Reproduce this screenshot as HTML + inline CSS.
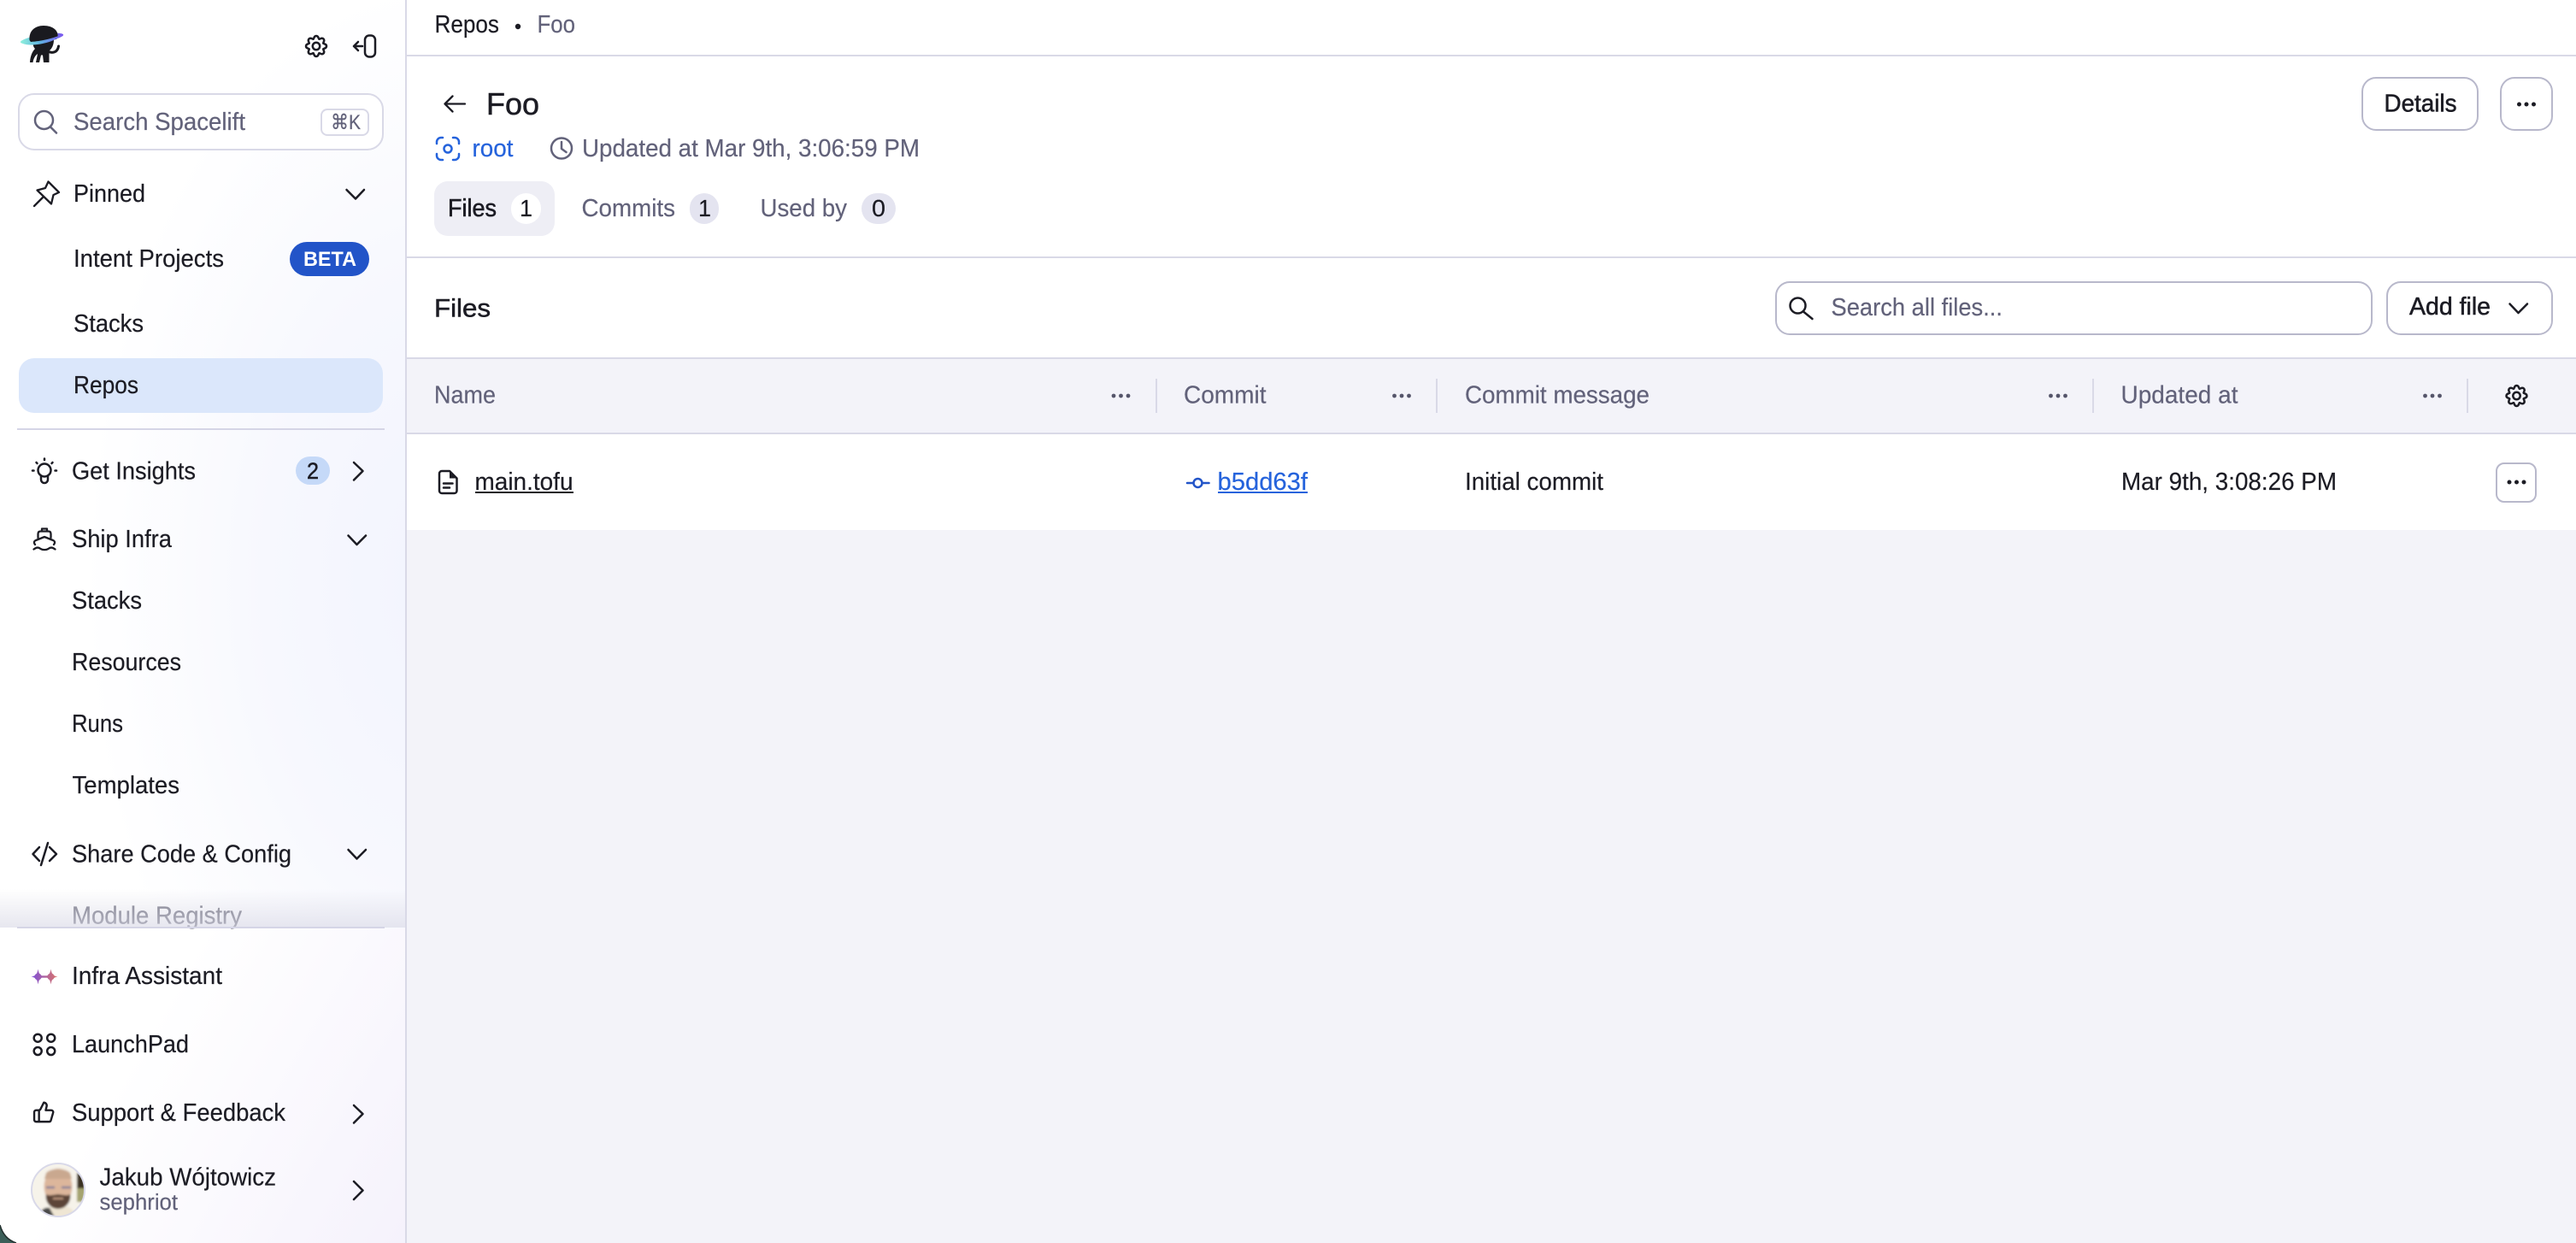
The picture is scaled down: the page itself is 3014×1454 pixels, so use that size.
<!DOCTYPE html>
<html lang="en">
<head>
<meta charset="utf-8">
<title>Foo - Repos</title>
<style>
html,body{margin:0;padding:0;width:3014px;height:1454px;overflow:hidden;background:#f3f3f9}
.a{position:absolute;box-sizing:border-box}
svg{position:absolute;left:0;top:0}
text{font-family:"Liberation Sans","DejaVu Sans",sans-serif;font-size:28.5px;fill:#1c1c24;stroke:#1c1c24;stroke-width:.2px}
text.g{fill:#62627a;stroke:#62627a}
text.b{fill:#2563dc;stroke:#2563dc}
text.m{stroke-width:.55px}
.i{fill:none;stroke:#1c1c24;stroke-width:2.5;stroke-linecap:round;stroke-linejoin:round}
.ig{stroke:#62627a}
.ib{stroke:#2563dc}
</style>
</head>
<body>
<div class="a" style="left:476px;top:0;width:2538px;height:620px;background:#fff"></div>
<div class="a" style="left:476px;top:420px;width:2538px;height:86px;background:#f3f3f9"></div>
<div class="a" style="left:476px;top:64px;width:2538px;height:2px;background:#d9d9e7"></div>
<div class="a" style="left:476px;top:300px;width:2538px;height:2px;background:#d9d9e7"></div>
<div class="a" style="left:476px;top:418px;width:2538px;height:2px;background:#d9d9e7"></div>
<div class="a" style="left:476px;top:506px;width:2538px;height:2px;background:#d9d9e7"></div>

<div class="a" style="left:0;top:0;width:476px;height:1086px;background:radial-gradient(420px 700px at 520px 680px,#f2f4fe 0%,#f7f8fe 50%,#ffffff 100%);border-right:2px solid #d9d9e7"></div>
<div class="a" style="left:0;top:1086px;width:476px;height:368px;background:linear-gradient(120deg,#ffffff 35%,#f5f2fc 100%);border-right:2px solid #d9d9e7"></div>

<div class="a" style="left:21px;top:109px;width:428px;height:67px;background:#fff;border:2px solid #d9d9e7;border-radius:19px"></div>
<div class="a" style="left:375px;top:127px;width:57px;height:32px;border:2px solid #d9d9e7;border-radius:8px"></div>
<div class="a" style="left:22px;top:419px;width:426px;height:64px;background:#dbe7fb;border-radius:18px"></div>
<div class="a" style="left:339px;top:283px;width:93px;height:40px;background:#2254c8;border-radius:20px"></div>
<div class="a" style="left:20px;top:501px;width:430px;height:2px;background:#d5d5e6"></div>
<div class="a" style="left:346px;top:534px;width:40px;height:33px;background:#c5d9f8;border-radius:17px"></div>

<div class="a" style="left:508px;top:212px;width:141px;height:64px;background:#eeeef5;border-radius:16px"></div>
<div class="a" style="left:598px;top:226px;width:35px;height:36px;background:#fff;border-radius:18px"></div>
<div class="a" style="left:807px;top:226px;width:34px;height:36px;background:#e4e4f0;border-radius:18px"></div>
<div class="a" style="left:1008px;top:226px;width:40px;height:36px;background:#e4e4f0;border-radius:18px"></div>

<div class="a" style="left:2763px;top:90px;width:137px;height:63px;background:#fff;border:2px solid #b8b8cb;border-radius:17px"></div>
<div class="a" style="left:2925px;top:90px;width:62px;height:63px;background:#fff;border:2px solid #b8b8cb;border-radius:17px"></div>
<div class="a" style="left:2077px;top:329px;width:699px;height:63px;background:#fff;border:2px solid #b8b8cb;border-radius:17px"></div>
<div class="a" style="left:2792px;top:329px;width:195px;height:63px;background:#fff;border:2px solid #b8b8cb;border-radius:17px"></div>
<div class="a" style="left:2920px;top:541px;width:48px;height:47px;background:#fff;border:2px solid #b8b8cb;border-radius:10px"></div>

<div class="a" style="left:1352px;top:443px;width:2px;height:40px;background:#d9d9e7"></div>
<div class="a" style="left:1680px;top:443px;width:2px;height:40px;background:#d9d9e7"></div>
<div class="a" style="left:2448px;top:443px;width:2px;height:40px;background:#d9d9e7"></div>
<div class="a" style="left:2886px;top:443px;width:2px;height:40px;background:#d9d9e7"></div>

<svg width="3014" height="1454" viewBox="0 0 3014 1454" xmlns="http://www.w3.org/2000/svg">
<defs>
<linearGradient id="ring" x1="24" y1="0" x2="74" y2="0" gradientUnits="userSpaceOnUse"><stop offset="0" stop-color="#8ff0dc"/><stop offset=".45" stop-color="#5fb4e0"/><stop offset="1" stop-color="#7a55f0"/></linearGradient>
<linearGradient id="spark" x1="36" y1="0" x2="68" y2="0" gradientUnits="userSpaceOnUse"><stop offset="0" stop-color="#7c50dc"/><stop offset="1" stop-color="#dc7468"/></linearGradient>
<linearGradient id="fade" x1="0" y1="0" x2="0" y2="1"><stop offset="0" stop-color="#d8d8e4" stop-opacity="0"/><stop offset="1" stop-color="#d8d8e6" stop-opacity=".62"/></linearGradient>
<clipPath id="av"><circle cx="68" cy="1392" r="31"/></clipPath>
<filter id="bl"><feGaussianBlur stdDeviation="1.2"/></filter>
<path id="tooth" d="M-3.44-8.31C-2.4-8.7-3-12 0-12S2.4-8.7 3.44-8.31"/>
<g id="gear"><use href="#tooth"/><use href="#tooth" transform="rotate(45)"/><use href="#tooth" transform="rotate(90)"/><use href="#tooth" transform="rotate(135)"/><use href="#tooth" transform="rotate(180)"/><use href="#tooth" transform="rotate(225)"/><use href="#tooth" transform="rotate(270)"/><use href="#tooth" transform="rotate(315)"/><circle r="4.2"/></g>
</defs>

<!-- logo -->
<ellipse cx="49" cy="45" rx="25.500" ry="4.500" transform="rotate(-10 49 45)" fill="url(#ring)"/>
<path d="M34.500 47C33.500 36 41 30 51 30C62 30 68.500 36 67.500 43L66 46 36 49Z" fill="#1a1a1f"/>
<path d="M38 49L63 46C63 53 60.500 57 57.500 59.500L57.500 73 51 73 50 64.500 48 64.500 46 73 42 73 44 63C41 65 39 69 38.500 73L35 73C35.500 65 38 60 41 57C39 55 38.500 52 38 49Z" fill="#1a1a1f"/>
<path d="M57 60.500C62 62.500 67.500 61 68.500 54" fill="none" stroke="#1a1a1f" stroke-width="3" stroke-linecap="round"/>
<path d="M24 49C36 50.500 55 47.500 74 40C66 47.500 50 52.500 36 52.500C30 52.500 25 51 24 49Z" fill="url(#ring)"/>

<g class="i" transform="translate(370 54)"><use href="#gear"/></g>
<path class="i" d="M424 54H414M419 49L414 54L419 59"/>
<rect class="i" x="427" y="41.500" width="12" height="25" rx="5"/>

<circle class="i ig" cx="51.500" cy="140.500" r="10.500"/><path class="i ig" d="M59 148.500L66 155.500"/>
<text x="86" y="152" class="g" textLength="201" lengthAdjust="spacingAndGlyphs">Search Spacelift</text>
<text x="387" y="151" class="g" style="font-size:24px" textLength="35" lengthAdjust="spacingAndGlyphs">⌘K</text>

<path class="i" d="M56.500 212.500L69 225L62.500 228L60 238.500L43.500 222.500L53 220ZM40 241L50 231" style="stroke-width:2.3"/>
<text x="86" y="236" textLength="84" lengthAdjust="spacingAndGlyphs">Pinned</text>
<path class="i" d="M405.500 222L416 232.500L426 222"/>
<text x="86" y="312" textLength="176" lengthAdjust="spacingAndGlyphs">Intent Projects</text>
<text x="355" y="311" style="font-size:24px;font-weight:bold;fill:#fff;stroke:none" textLength="62" lengthAdjust="spacingAndGlyphs">BETA</text>
<text x="86" y="388" textLength="82" lengthAdjust="spacingAndGlyphs">Stacks</text>
<text x="86" y="460" textLength="76" lengthAdjust="spacingAndGlyphs">Repos</text>

<!-- insights -->
<circle class="i" cx="52" cy="550" r="7.500"/>
<path class="i" d="M48 557V561A4 4 0 0 0 56 561V557M52 536.500V538M42.500 541L43.500 542M61.500 541L60.500 542M38 550.500H39.500M64.500 550.500H66"/>
<text x="84" y="560.500" textLength="145" lengthAdjust="spacingAndGlyphs">Get Insights</text>
<text x="359" y="560" style="font-size:27px;stroke-width:.5px" textLength="14" lengthAdjust="spacingAndGlyphs">2</text>
<path class="i" d="M414 541L424.500 551L414 561.500"/>

<!-- ship -->
<path class="i" d="M44.500 629V624.500Q44.500 621.500 47.500 621.500H56.500Q59.500 621.500 59.500 624.500V629M49 621V618.500H55V621M41 637Q38.500 633.500 42 632L52 628L62 632Q65.500 633.500 63 637M39.500 642.500C43 640 45 640 47.500 642C50 643.500 54 643.500 56.500 642C59 640 61 640 64.500 642.500" style="stroke-width:2.300"/>
<text x="84" y="640" textLength="117" lengthAdjust="spacingAndGlyphs">Ship Infra</text>
<path class="i" d="M407.500 626.500L417.500 637L428 626.500"/>
<text x="84" y="712" textLength="82" lengthAdjust="spacingAndGlyphs">Stacks</text>
<text x="84" y="784" textLength="128" lengthAdjust="spacingAndGlyphs">Resources</text>
<text x="84" y="856" textLength="60" lengthAdjust="spacingAndGlyphs">Runs</text>
<text x="84.500" y="928" textLength="125.500" lengthAdjust="spacingAndGlyphs">Templates</text>

<path class="i" d="M46 991L38.500 999L46 1007M56 986L48 1012M58 991L66 999L58 1007"/>
<text x="84" y="1008.500" textLength="257" lengthAdjust="spacingAndGlyphs">Share Code &amp; Config</text>
<path class="i" d="M407.500 994L417.500 1004.500L428 994"/>
<text x="84" y="1080.500" textLength="199" lengthAdjust="spacingAndGlyphs" style="fill:#7a7a88;stroke:#7a7a88">Module Registry</text>
<rect x="0" y="1040" width="474" height="45" fill="url(#fade)"/>
<rect x="20" y="1084" width="430" height="2" fill="#d5d5e6"/>

<!-- bottom -->
<g fill="url(#spark)">
<path d="M44.500 1133.500C45.500 1139.500 47 1141.500 52.500 1142.500C47 1143.500 45.500 1145.500 44.500 1151.500C43.500 1145.500 42 1143.500 36.500 1142.500C42 1141.500 43.500 1139.500 44.500 1133.500Z"/>
<path d="M59.500 1133.500C60.500 1139.500 62 1141.500 67.500 1142.500C62 1143.500 60.500 1145.500 59.500 1151.500C58.500 1145.500 57 1143.500 51.500 1142.500C57 1141.500 58.500 1139.500 59.500 1133.500Z"/>
<circle cx="44.500" cy="1142.500" r="4"/><circle cx="59.500" cy="1142.500" r="4"/>
<rect x="44" y="1141.300" width="16" height="2.400"/>
</g>
<text x="84" y="1151" textLength="176" lengthAdjust="spacingAndGlyphs">Infra Assistant</text>

<circle class="i" cx="44.200" cy="1214.200" r="4.500"/><circle class="i" cx="59.700" cy="1214.200" r="4.500"/><circle class="i" cx="44.200" cy="1229.500" r="4.500"/><circle class="i" cx="59.700" cy="1229.500" r="4.500"/>
<text x="84" y="1231" textLength="137" lengthAdjust="spacingAndGlyphs">LaunchPad</text>

<g transform="translate(37.800 1287.500) scale(1.12)"><path class="i" style="stroke-width:2.150" d="M7 10v12M15 5.880 14 10h5.830a2 2 0 0 1 1.920 2.560l-2.330 8A2 2 0 0 1 17.500 22H4a2 2 0 0 1-2-2v-8a2 2 0 0 1 2-2h2.760a2 2 0 0 0 1.790-1.110L12 2a3.130 3.130 0 0 1 3 3.880Z"/></g>
<text x="84" y="1311" textLength="250" lengthAdjust="spacingAndGlyphs">Support &amp; Feedback</text>
<path class="i" d="M414 1293L424.500 1303L414 1313.500"/>

<!-- avatar -->
<g clip-path="url(#av)"><g filter="url(#bl)">
<rect x="36" y="1360" width="64" height="64" fill="#f6f3ea"/>
<rect x="90" y="1372" width="10" height="18" fill="#3a3024"/>
<rect x="90" y="1390" width="10" height="16" fill="#a5a470"/>
<path d="M46 1424C48 1414 54 1412 62 1412L80 1412C84 1414 88 1418 90 1424Z" fill="#efe6d4"/>
<path d="M46 1424C48 1414 52 1412 58 1413L64 1424Z" fill="#4a4a48"/>
<ellipse cx="68" cy="1388" rx="16.500" ry="21" fill="#dcb69b"/>
<path d="M54 1372C60 1366 76 1366 82 1372L84 1379 52 1379Z" fill="#c9a88f"/>
<path d="M54 1397C57 1399 61 1398 68 1397C75 1398 79 1399 82 1397C84 1404 78 1414 68 1414C58 1414 52 1404 54 1397Z" fill="#5c4537"/>
<path d="M62 1402H74" stroke="#c9a088" stroke-width="1.800"/>
<path d="M54 1389H64M72 1389H83" stroke="#787898" stroke-width="2.200"/>
</g></g>
<circle cx="68" cy="1392" r="31" fill="none" stroke="#d9d9e9" stroke-width="2"/>
<text x="116.500" y="1386.500" textLength="206.500" lengthAdjust="spacingAndGlyphs">Jakub Wójtowicz</text>
<text x="116.500" y="1415" class="g" style="font-size:25.500px" textLength="91.500" lengthAdjust="spacingAndGlyphs">sephriot</text>
<path class="i" d="M414 1382L424.500 1392.500L414 1403"/>

<path d="M0 1433C3 1444 10 1451 19 1454H0Z" fill="#3c5f59"/>
<path d="M0 1433C3 1444 10 1451 19 1454" fill="none" stroke="#23302e" stroke-width="1.500"/>

<!-- breadcrumb -->
<text x="508.500" y="38" textLength="75.500" lengthAdjust="spacingAndGlyphs">Repos</text>
<circle cx="606" cy="31" r="3.200" fill="#1c1c24"/>
<text x="628.500" y="38" class="g" textLength="44.500" lengthAdjust="spacingAndGlyphs">Foo</text>

<!-- title -->
<path class="i" d="M544 121.500H520.500M529.500 112.500L520.500 121.500L529.500 130.500" style="stroke-width:2.300"/>
<text x="569" y="134" class="m" style="font-size:36.500px" textLength="62" lengthAdjust="spacingAndGlyphs">Foo</text>
<path class="i ib" d="M511 168V166A5 5 0 0 1 516 161H518M530 161H532A5 5 0 0 1 537 166V168M537 180V182A5 5 0 0 1 532 187H530M518 187H516A5 5 0 0 1 511 182V180"/>
<circle class="i ib" cx="524" cy="174" r="4.500"/>
<text x="552.500" y="183" class="b" textLength="48" lengthAdjust="spacingAndGlyphs">root</text>
<circle class="i ig" cx="657" cy="173.500" r="12"/><path class="i ig" d="M657 166V174L662.500 178"/>
<text x="681" y="183" class="g" textLength="395" lengthAdjust="spacingAndGlyphs">Updated at Mar 9th, 3:06:59 PM</text>

<!-- tabs -->
<text x="524" y="253" class="m" textLength="57" lengthAdjust="spacingAndGlyphs">Files</text>
<text x="608" y="253" style="font-size:28px" textLength="15" lengthAdjust="spacingAndGlyphs">1</text>
<text x="680.500" y="253" class="g" textLength="109.500" lengthAdjust="spacingAndGlyphs">Commits</text>
<text x="817" y="253" style="font-size:28px" textLength="15" lengthAdjust="spacingAndGlyphs">1</text>
<text x="889.500" y="253" class="g" textLength="101.500" lengthAdjust="spacingAndGlyphs">Used by</text>
<text x="1020" y="253" style="font-size:28px" textLength="16" lengthAdjust="spacingAndGlyphs">0</text>

<!-- buttons -->
<text x="2789.500" y="130.500" class="m" textLength="85" lengthAdjust="spacingAndGlyphs">Details</text>
<g fill="#1c1c24"><circle cx="2947.500" cy="122" r="2.500"/><circle cx="2956" cy="122" r="2.500"/><circle cx="2964.500" cy="122" r="2.500"/></g>

<!-- files bar -->
<text x="508" y="370.500" class="m" style="font-size:30px" textLength="66" lengthAdjust="spacingAndGlyphs">Files</text>
<circle class="i" cx="2103.500" cy="357.500" r="9"/><path class="i" d="M2110 364.500L2120.500 373"/>
<text x="2142.500" y="369" class="g" textLength="200.500" lengthAdjust="spacingAndGlyphs">Search all files...</text>
<text x="2819" y="368" class="m" textLength="95" lengthAdjust="spacingAndGlyphs">Add file</text>
<path class="i" d="M2936.500 355.500L2946.500 366L2957 355.500"/>

<!-- table header -->
<text x="508" y="471.500" class="g" textLength="72" lengthAdjust="spacingAndGlyphs">Name</text>
<text x="1385" y="471.500" class="g" textLength="96.500" lengthAdjust="spacingAndGlyphs">Commit</text>
<text x="1714" y="471.500" class="g" textLength="216" lengthAdjust="spacingAndGlyphs">Commit message</text>
<text x="2481.500" y="471.500" class="g" textLength="137" lengthAdjust="spacingAndGlyphs">Updated at</text>
<g fill="#55556a">
<circle cx="1303" cy="463" r="2.400"/><circle cx="1311.500" cy="463" r="2.400"/><circle cx="1320" cy="463" r="2.400"/>
<circle cx="1631.500" cy="463" r="2.400"/><circle cx="1640" cy="463" r="2.400"/><circle cx="1648.500" cy="463" r="2.400"/>
<circle cx="2399.500" cy="463" r="2.400"/><circle cx="2408" cy="463" r="2.400"/><circle cx="2416.500" cy="463" r="2.400"/>
<circle cx="2837.500" cy="463" r="2.400"/><circle cx="2846" cy="463" r="2.400"/><circle cx="2854.500" cy="463" r="2.400"/>
</g>
<g class="i" transform="translate(2944.500 463)"><use href="#gear"/></g>

<!-- row -->
<path class="i" d="M517 551H526L534.500 559.500V574A3 3 0 0 1 531.500 577H517A3 3 0 0 1 514 574V554A3 3 0 0 1 517 551Z"/>
<path fill="#1c1c24" d="M526 551L534.500 559.500H526Z"/>
<path class="i" d="M519 565.500H529.500M519 570.500H526"/>
<text x="555.500" y="572.800" textLength="115" lengthAdjust="spacingAndGlyphs">main.tofu</text>
<rect x="556" y="575" width="115" height="2" fill="#1c1c24"/>
<circle class="i" style="stroke:#2254c8" cx="1401.500" cy="565" r="5"/><path class="i" style="stroke:#2254c8" d="M1389 565H1396M1407 565H1414.500"/>
<text x="1424.500" y="572.800" class="b" textLength="105.500" lengthAdjust="spacingAndGlyphs">b5dd63f</text>
<rect x="1425" y="575" width="105" height="2" fill="#2563dc"/>
<text x="1714" y="572.800" textLength="162" lengthAdjust="spacingAndGlyphs">Initial commit</text>
<text x="2482" y="572.800" textLength="252" lengthAdjust="spacingAndGlyphs">Mar 9th, 3:08:26 PM</text>
<g fill="#1c1c24"><circle cx="2936" cy="564" r="2.500"/><circle cx="2944.500" cy="564" r="2.500"/><circle cx="2953" cy="564" r="2.500"/></g>
</svg>
</body>
</html>
